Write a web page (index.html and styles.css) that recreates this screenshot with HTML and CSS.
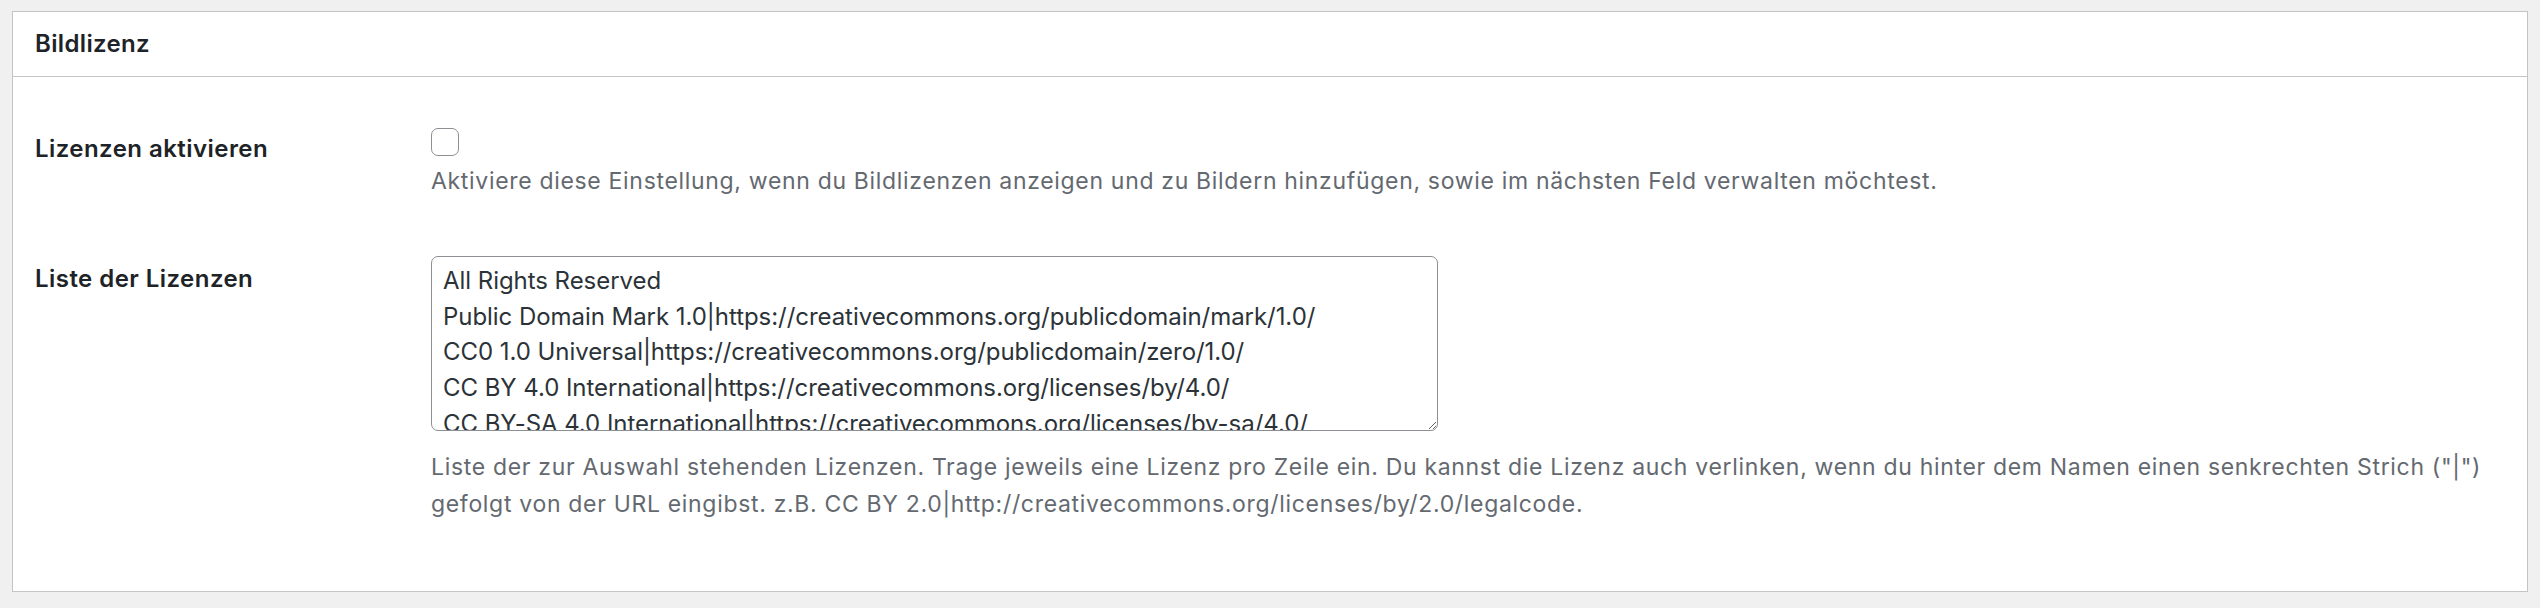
FILE: index.html
```html
<!DOCTYPE html>
<html lang="de">
<head>
<meta charset="utf-8">
<title>Bildlizenz</title>
<link rel="stylesheet" href="styles.css">
</head>
<body>
<div class="postbox">
  <div class="postbox-header">
    <h2 class="postbox-title">Bildlizenz</h2>
  </div>
  <div class="inside">
    <div class="form-row row-first">
      <div class="row-label"><label for="enable">Lizenzen aktivieren</label></div>
      <div class="row-field">
        <input type="checkbox" id="enable" class="checkbox">
        <p class="description">Aktiviere diese Einstellung, wenn du Bildlizenzen anzeigen und zu Bildern hinzufügen, sowie im nächsten Feld verwalten möchtest.</p>
      </div>
    </div>
    <div class="form-row row-second">
      <div class="row-label"><label for="licenses">Liste der Lizenzen</label></div>
      <div class="row-field">
        <textarea id="licenses" class="licenses" spellcheck="false">All Rights Reserved
Public Domain Mark 1.0|https://creativecommons.org/publicdomain/mark/1.0/
CC0 1.0 Universal|https://creativecommons.org/publicdomain/zero/1.0/
CC BY 4.0 International|https://creativecommons.org/licenses/by/4.0/
CC BY-SA 4.0 International|https://creativecommons.org/licenses/by-sa/4.0/
CC BY-ND 4.0 International|https://creativecommons.org/licenses/by-nd/4.0/
CC BY-NC 4.0 International|https://creativecommons.org/licenses/by-nc/4.0/</textarea>
        <p class="description description-wide">Liste der zur Auswahl stehenden Lizenzen. Trage jeweils eine Lizenz pro Zeile ein. Du kannst die Lizenz auch verlinken, wenn du hinter dem Namen einen senkrechten Strich ("|") gefolgt von der URL eingibst. z.B. CC BY 2.0|http://creativecommons.org/licenses/by/2.0/legalcode.</p>
      </div>
    </div>
  </div>
</div>
</body>
</html>
```

FILE: styles.css
```css
html, body {
  margin: 0;
  padding: 0;
}

body {
  background: #f0f0f1;
  padding: 11px 12px 16px 12px;
  font-family: Inter, "Noto Sans", "Liberation Sans", sans-serif;
  color: #1d2327;
}

.postbox {
  background: #fff;
  border: 1px solid #c3c4c7;
  height: 579px;
  box-sizing: content-box;
}

.postbox-header {
  height: 64px;
  border-bottom: 1px solid #c3c4c7;
  display: flex;
  align-items: center;
  padding-left: 22px;
}

.postbox-title {
  margin: 0;
  font-size: 24px;
  line-height: 32px;
  font-weight: 600;
  letter-spacing: 0.35px;
  color: #1d2327;
}

.inside {
  padding-left: 22px;
}

.form-row {
  display: grid;
  grid-template-columns: 396px 1fr;
}

.row-label label {
  display: block;
  font-size: 24px;
  line-height: 32px;
  font-weight: 600;
  letter-spacing: 0.45px;
  color: #1d2327;
}

.row-first .row-label {
  padding-top: 56px;
}

.row-first .row-field {
  padding-top: 51px;
}

.row-second .row-label {
  padding-top: 63px;
}

.row-second .row-field {
  padding-top: 56px;
}

.checkbox {
  -webkit-appearance: none;
  appearance: none;
  display: block;
  margin: 0;
  width: 28px;
  height: 28px;
  box-sizing: border-box;
  border: 1px solid #8c8f94;
  border-radius: 7px;
  background: #fff;
}

.description {
  margin: 7px 0 0 0;
  font-size: 23px;
  line-height: 37px;
  letter-spacing: 0.68px;
  color: #646970;
}

.description-wide {
  margin-top: 18px;
  max-width: 2078px;
}

.licenses {
  display: block;
  margin: 0;
  width: 1007px;
  height: 175px;
  box-sizing: border-box;
  padding: 6px 11px;
  border: 1px solid #8c8f94;
  border-radius: 7px;
  font-family: Inter, "Noto Sans", "Liberation Sans", sans-serif;
  font-size: 24px;
  line-height: 35.7px;
  letter-spacing: -0.05px;
  color: #2c3338;
  background: #fff;
  overflow: hidden;
  resize: both;
  white-space: pre;
}
```
